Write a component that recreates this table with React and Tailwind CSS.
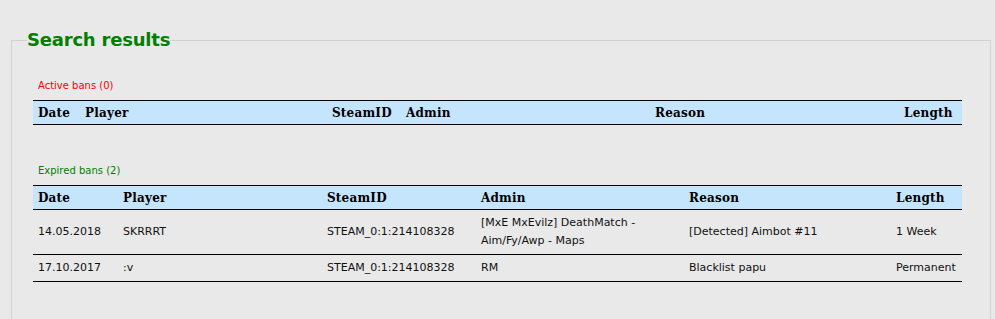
import React from 'react'

const activeCols = [
  { label: 'Date', w: 'w-[47px]' },
  { label: 'Player', w: 'w-[247px]' },
  { label: 'SteamID', w: 'w-[74px]' },
  { label: 'Admin', w: 'w-[249px]' },
  { label: 'Reason', w: 'w-[249px]' },
  { label: 'Length', w: 'w-[63px]' },
]

const expiredCols = [
  { label: 'Date', w: 'w-[85px]' },
  { label: 'Player', w: 'w-[204px]' },
  { label: 'SteamID', w: 'w-[154px]' },
  { label: 'Admin', w: 'w-[208px]' },
  { label: 'Reason', w: 'w-[207px]' },
  { label: 'Length', w: 'w-[71px]' },
]

const expired = [
  ['14.05.2018', 'SKRRRT', 'STEAM_0:1:214108328', '[MxE MxEvilz] DeathMatch - Aim/Fy/Awp - Maps', '[Detected] Aimbot #11', '1 Week'],
  ['17.10.2017', ':v', 'STEAM_0:1:214108328', 'RM', 'Blacklist papu', 'Permanent'],
]

const BanTable = ({ cols, rows }) => (
  <table className="w-[929px] ml-[6px] border-collapse table-fixed">
    <thead>
      <tr className="bg-[#c5e5fd] border-y border-black">
        {cols.map((c) => (
          <th
            key={c.label}
            className={`${c.w} h-[24px] px-[5px] text-left align-middle font-bold text-[12px] tracking-[0.2px] text-black`}
            style={{ fontFamily: '"DejaVu Serif", serif' }}
          >
            {c.label}
          </th>
        ))}
      </tr>
    </thead>
    <tbody>
      {rows.map((r, i) => (
        <tr key={i} className="border-b border-black">
          {r.map((cell, j) => (
            <td key={j} className="px-[5px] py-[4px] align-middle text-[11px] leading-[18px] text-[#111]">
              {cell}
            </td>
          ))}
        </tr>
      ))}
    </tbody>
  </table>
)

export default function App() {
  return (
    <div className="min-h-screen bg-[#e9e9e9] pt-[28px] pl-[11px] pr-[4px] font-['DejaVu_Sans',sans-serif]">
      <fieldset className="border border-[#d2d2d2] px-[15px] pb-[40px] min-h-[300px]">
        <legend className="text-[18px] leading-[24px] font-bold text-[#008000] tracking-[-0.2px]">
          Search results
        </legend>

        {/* Active bans */}
        <div className="mt-[27px] ml-[11px] mb-[7px] h-[14px] text-[10px] leading-[14px] text-[#ff0000]">
          Active bans (0)
        </div>
        <BanTable cols={activeCols} rows={[]} />

        {/* Expired bans */}
        <div className="mt-[39px] ml-[11px] mb-[7px] h-[14px] text-[10px] leading-[14px] text-[#008000]">
          Expired bans (2)
        </div>
        <BanTable cols={expiredCols} rows={expired} />
      </fieldset>
    </div>
  )
}
